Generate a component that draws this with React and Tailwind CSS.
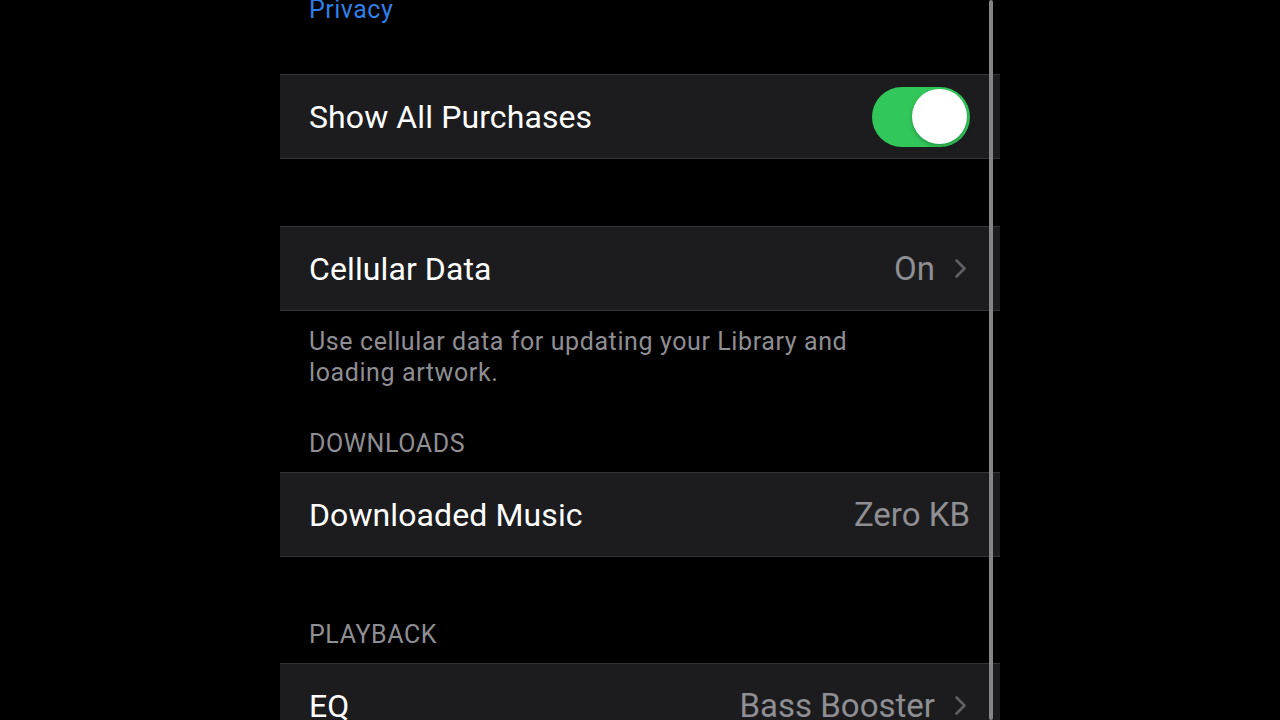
import React from 'react';

const Chevron = () => (
  <svg width="13" height="21" viewBox="0 0 13 21" className="ml-[19px] mr-[3px]">
    <path d="M2.5 2.5 L10.5 10.5 L2.5 18.5" fill="none" stroke="#5f5f64" strokeWidth="2.6" strokeLinecap="round" strokeLinejoin="round" />
  </svg>
);

const Toggle = () => (
  <div className="w-[98px] h-[60px] rounded-full bg-[#32c75a] flex items-center justify-end pr-[3px]">
    <div className="w-[55px] h-[55px] rounded-full bg-white shadow-[0_2px_4px_rgba(0,0,0,0.25)]" />
  </div>
);

const Row = ({ label, children }) => (
  <div className="h-[85px] shrink-0 bg-[#1c1c1e] border-y border-[#343436] flex items-center justify-between pl-[29px] pr-[30px]">
    <span className="text-[32px] text-white tracking-[0.1px]">{label}</span>
    <div className="flex items-center">{children}</div>
  </div>
);

const Header = ({ children }) => (
  <div className="shrink-0 px-[29px] text-[25px] leading-[30px] text-[#8e8e93] uppercase tracking-[0.6px]">{children}</div>
);

export default function App() {
  return (
    <div className="w-[1280px] h-[720px] bg-black overflow-hidden" style={{ fontFamily: 'Roboto, "Liberation Sans", sans-serif' }}>
      <div className="relative w-[720px] h-[720px] ml-[280px] flex flex-col">
        {/* previous section footer */}
        <div className="h-[74px] shrink-0 px-[29px] flex flex-col">
          <div className="-mt-[5px] text-[25px] leading-[30px] text-[#2f7fe6] tracking-[0.5px]">Privacy</div>
        </div>

        <Row label="Show All Purchases">
          <Toggle />
        </Row>

        <div className="h-[67px] shrink-0" />

        <Row label="Cellular Data">
          <span className="text-[33px] text-[#8e8e93]">On</span>
          <Chevron />
        </Row>

        <div className="shrink-0 px-[29px] pt-[15px] text-[25px] leading-[31px] text-[#8e8e93] tracking-[0.6px]">
          Use cellular data for updating your Library and<br />loading artwork.
        </div>

        <div className="h-[41px] shrink-0" />
        <Header>Downloads</Header>
        <div className="h-[13px] shrink-0" />

        <Row label="Downloaded Music">
          <span className="text-[33px] text-[#8e8e93]">Zero KB</span>
        </Row>

        <div className="h-[63px] shrink-0" />
        <Header>Playback</Header>
        <div className="h-[13px] shrink-0" />

        <Row label="EQ">
          <span className="text-[33px] text-[#8e8e93]">Bass Booster</span>
          <Chevron />
        </Row>

        {/* scroll indicator */}
        <div className="absolute top-0 left-[709px] w-[4px] h-[720px] bg-[#858587] rounded-full" />
      </div>
    </div>
  );
}
